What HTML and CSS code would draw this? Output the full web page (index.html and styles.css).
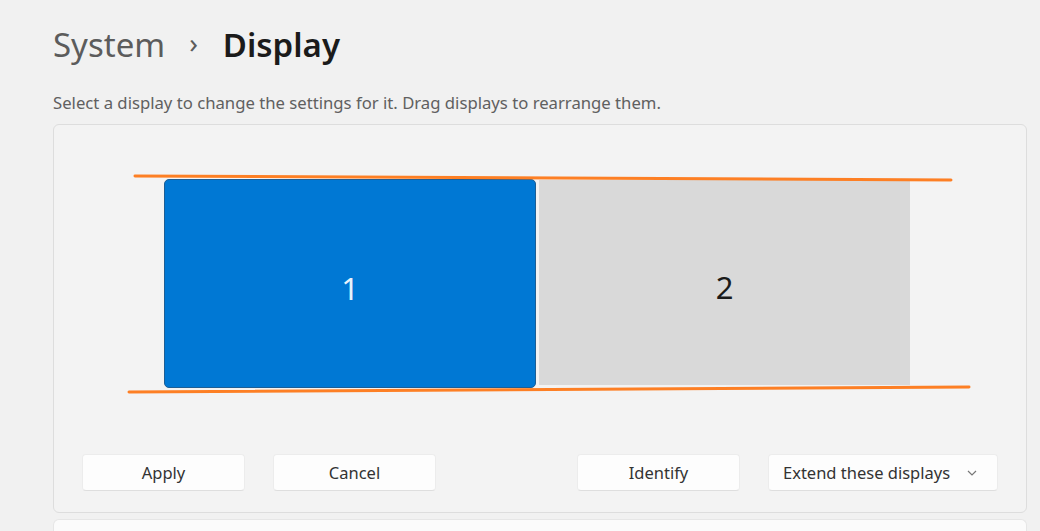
FILE: index.html
```html
<!DOCTYPE html>
<html lang="en">
<head>
    <meta charset="UTF-8">
    <title>System - Display</title>
    <link rel="stylesheet" href="styles.css">
</head>
<body>

    <div class="page">
        <h1 class="title">
            <span class="crumb">System</span>
            <span class="chevron">&#8250;</span>
            <span class="current">Display</span>
        </h1>

        <p class="hint">Select a display to change the settings for it. Drag displays to rearrange them.</p>

        <!-- Monitor-Anordnung -->
        <div class="card">
            <div class="monitors">
                <div class="monitor selected">1</div>
                <div class="monitor">2</div>
            </div>

            <div class="actions">
                <div class="group">
                    <button class="btn">Apply</button>
                    <button class="btn">Cancel</button>
                </div>
                <div class="group">
                    <button class="btn">Identify</button>
                    <button class="btn dropdown">Extend these displays
                        <svg width="10" height="6" viewBox="0 0 10 6"><path d="M1 1 L5 5 L9 1" fill="none" stroke="#777" stroke-width="1.2"/></svg>
                    </button>
                </div>
            </div>
        </div>

        <div class="card next"></div>
    </div>

    <!-- Markierungslinien -->
    <svg class="marks" width="1040" height="531" viewBox="0 0 1040 531">
        <line x1="135" y1="176" x2="951" y2="180" stroke="#fd7f24" stroke-width="3" stroke-linecap="round"/>
        <line x1="129" y1="392" x2="969" y2="387" stroke="#fd7f24" stroke-width="3" stroke-linecap="round"/>
    </svg>

</body>
</html>
```

FILE: styles.css
```css
body {
    margin: 0;
    background-color: #f1f1f1;
    font-family: "Noto Sans", "Open Sans", sans-serif;
    color: #1b1b1b;
    height: 531px;
    overflow: hidden;
    position: relative;
}

.page {
    padding: 22px 12px 0 53px;
}

.title {
    margin: 0;
    font-size: 33px;
    font-weight: 400;
    display: flex;
    align-items: center;
    height: 44px;
}

.crumb {
    color: #5c5c5c;
}

.chevron {
    color: #5c5c5c;
    font-size: 28px;
    margin: 0 25px 0 24px;
    position: relative;
    top: -2px;
}

.current {
    font-weight: 600;
    color: #1b1b1b;
}

.hint {
    margin: 25px 0 0 0;
    height: 33px;
    font-size: 16.7px;
    color: #606060;
}

.card {
    background-color: #f3f3f3;
    border: 1.5px solid #dddddd;
    border-radius: 6px;
    width: 974px;
    height: 389px;
    box-sizing: border-box;
    display: flex;
    flex-direction: column;
}

.monitors {
    display: flex;
    align-items: flex-start;
    gap: 3px;
    margin: 54px 0 0 110px;
}

.monitor {
    width: 371px;
    height: 205px;
    background-color: #d9d9d9;
    display: flex;
    justify-content: center;
    align-items: center;
    padding-top: 8px;
    box-sizing: border-box;
    font-size: 31px;
    color: #1b1b1b;
    margin-top: 1px;
}

.monitor.selected {
    width: 372px;
    height: 209px;
    margin-top: 0;
    background-color: #0078d4;
    border: 1px solid #1d5e94;
    border-radius: 5px;
    color: #e8f2fb;
}

.actions {
    display: flex;
    justify-content: space-between;
    padding: 0 28px;
    margin-top: 66px;
}

.group {
    display: flex;
    gap: 28px;
}

.btn {
    width: 163px;
    height: 37px;
    background-color: #fdfdfd;
    border: 1px solid #ececec;
    border-bottom-color: #dedede;
    border-radius: 4px;
    font-family: inherit;
    font-size: 16.5px;
    color: #333333;
    cursor: pointer;
}

.btn.dropdown {
    width: 230px;
    display: flex;
    align-items: center;
    justify-content: space-between;
    padding: 0 20px 0 14px;
}

.card.next {
    margin-top: 6px;
    height: 12px;
    border-bottom: none;
    border-radius: 6px 6px 0 0;
    background-color: #fbfbfb;
    border-color: #e6e6e6;
}

/* Overlay fuer die orangen Linien */
.marks {
    position: absolute;
    top: 0;
    left: 0;
    pointer-events: none;
}
```
